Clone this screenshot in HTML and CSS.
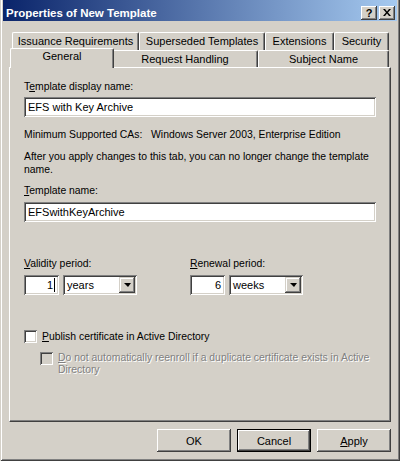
FILE: index.html
```html
<!DOCTYPE html>
<html lang="en">
<head>
    <meta charset="UTF-8">
    <title>Properties of New Template</title>
<link rel="stylesheet" href="styles.css">
</head>
<body>
    <div class="window">
        <div class="titlebar">
            <span class="title">Properties of New Template</span>
            <div class="caption-btns">
                <span class="cap-btn">?</span>
                <span class="cap-btn">
                    <svg width="8" height="7" viewBox="0 0 8 7"><path d="M0 0h2l2 2.5L6 0h2L5 3.5 8 7H6L4 4.5 2 7H0l3-3.5z" fill="#000"/></svg>
                </span>
            </div>
        </div>

        <div class="client">
            <div class="tabs">
                <div class="tab-row back">
                    <div class="tab t-issuance">Issuance Requirements</div>
                    <div class="tab t-superseded">Superseded Templates</div>
                    <div class="tab t-extensions">Extensions</div>
                    <div class="tab t-security">Security</div>
                </div>
                <div class="tab-row front">
                    <div class="tab t-general active">General</div>
                    <div class="tab t-request">Request Handling</div>
                    <div class="tab t-subject">Subject Name</div>
                </div>
            </div>

            <div class="panel">
                <div class="label">T<u>e</u>mplate display name:</div>
                <div class="edit wide">EFS with Key Archive</div>

                <div class="info">Minimum Supported CAs:&nbsp;&nbsp; Windows Server 2003, Enterprise Edition</div>

                <div class="note">After you apply changes to this tab, you can no longer change the template<br>name.</div>

                <div class="label gap-small"><u>T</u>emplate name:</div>
                <div class="edit wide name">EFSwithKeyArchive</div>

                <div class="periods">
                    <div class="period">
                        <div class="label"><u>V</u>alidity period:</div>
                        <div class="period-controls">
                            <div class="edit num">1<span class="caret"></span></div>
                            <div class="combo">
                                <span class="combo-text">years</span>
                                <span class="combo-btn"><span class="arrow"></span></span>
                            </div>
                        </div>
                    </div>
                    <div class="period">
                        <div class="label"><u>R</u>enewal period:</div>
                        <div class="period-controls">
                            <div class="edit num">6</div>
                            <div class="combo">
                                <span class="combo-text">weeks</span>
                                <span class="combo-btn"><span class="arrow"></span></span>
                            </div>
                        </div>
                    </div>
                </div>

                <div class="check publish">
                    <span class="box"></span>
                    <span class="check-label"><u>P</u>ublish certificate in Active Directory</span>
                </div>
                <div class="check sub disabled">
                    <span class="box"></span>
                    <span class="check-label"><u>D</u>o not automatically reenroll if a duplicate certificate exists in Active<br>Directory</span>
                </div>
            </div>

            <div class="buttons">
                <button class="btn">OK</button>
                <button class="btn default">Cancel</button>
                <button class="btn"><u>A</u>pply</button>
            </div>
        </div>
    </div>
</body>
</html>
```

FILE: styles.css
```css
body {
    margin: 0;
    font-family: "Liberation Sans", Arial, sans-serif;
    font-size: 10.4px;
    color: #000;
    background-color: #d4d0c8;
}
.window {
    width: 400px;
    height: 461px;
    box-sizing: border-box;
    padding: 0 3px 3px 3px;
    background-color: #d4d0c8;
    box-shadow: inset 1px 0 #d4d0c8, inset -1px -1px #404040, inset 2px 0 #fff, inset -2px -2px #808080;
}
.titlebar {
    height: 21px;
    box-sizing: border-box;
    padding: 4px 2px 0 3px;
    display: flex;
    align-items: center;
    justify-content: space-between;
    background: linear-gradient(to right, #0a246a, #a6caf0);
}
.title {
    color: #fff;
    font-weight: bold;
    font-size: 11.5px;
}
.caption-btns {
    display: flex;
    gap: 2px;
}
.cap-btn {
    width: 16px;
    height: 14px;
    box-sizing: border-box;
    display: flex;
    align-items: center;
    justify-content: center;
    background-color: #d4d0c8;
    font-weight: bold;
    font-size: 11px;
    box-shadow: inset -1px -1px #404040, inset 1px 1px #fff, inset -2px -2px #808080;
}

.client {
    padding: 11px 6px 0 6px;
}

/* tabs */
.tab-row {
    display: flex;
    padding-left: 3px;
}
.tab-row.back {
    height: 18px;
}
.tab-row.front {
    height: 17px;
    align-items: flex-start;
}
.tab {
    box-sizing: border-box;
    height: 100%;
    text-align: center;
    line-height: 16px;
    font-size: 11px;
    background-color: #d4d0c8;
    border-top: 1px solid #fff;
    border-left: 1px solid #fff;
    border-right: 1px solid #404040;
    border-radius: 2px 2px 0 0;
    box-shadow: inset -1px 0 #808080;
    white-space: nowrap;
}
.t-issuance { width: 127px; }
.t-superseded { width: 126px; }
.t-extensions { width: 69px; }
.t-security { width: 55px; }
.t-general { width: 100px; }
.t-request { width: 146px; }
.t-subject { width: 131px; }
.tab.active {
    position: relative;
    z-index: 1;
    width: 104px;
    height: 20px;
    margin: -2px -2px 0 -2px;
    line-height: 15px;
}

/* page */
.panel {
    height: 355px;
    box-sizing: border-box;
    padding: 12px 14px 0 14px;
    border-top: 1px solid #fff;
    border-left: 1px solid #fff;
    border-right: 1px solid #404040;
    border-bottom: 1px solid #404040;
    box-shadow: inset -1px -1px #808080;
    line-height: 13px;
}
.edit {
    height: 20px;
    box-sizing: border-box;
    margin-top: 4px;
    padding: 0 4px;
    line-height: 20px;
    font-size: 11px;
    background-color: #fff;
    box-shadow: inset 1px 1px #808080, inset -1px -1px #fff, inset 2px 2px #404040, inset -2px -2px #d4d0c8;
}
.edit.wide + .info {
    margin-top: 11px;
}
.note {
    margin-top: 9px;
}
.gap-small {
    margin-top: 8px;
}
.edit.name {
    margin-top: 5px;
}
.periods {
    display: grid;
    grid-template-columns: 166px 1fr;
    margin-top: 35px;
}
.period-controls {
    display: flex;
    gap: 4px;
    margin-top: 5px;
}
.period-controls .edit {
    margin-top: 0;
}
.edit.num {
    width: 35px;
    text-align: right;
    padding-right: 4px;
    display: flex;
    justify-content: flex-end;
    align-items: center;
}
.caret {
    width: 1px;
    height: 14px;
    margin-left: 1px;
    background-color: #000;
}
.combo {
    width: 74px;
    height: 20px;
    box-sizing: border-box;
    padding: 2px;
    display: flex;
    font-size: 11px;
    background-color: #fff;
    box-shadow: inset 1px 1px #808080, inset -1px -1px #fff, inset 2px 2px #404040, inset -2px -2px #d4d0c8;
}
.combo-text {
    flex: 1;
    padding-left: 2px;
    line-height: 16px;
}
.combo-btn {
    width: 16px;
    height: 16px;
    box-sizing: border-box;
    display: flex;
    align-items: center;
    justify-content: center;
    background-color: #d4d0c8;
    box-shadow: inset -1px -1px #404040, inset 1px 1px #d4d0c8, inset -2px -2px #808080, inset 2px 2px #fff;
}
.arrow {
    width: 0;
    height: 0;
    border-left: 4px solid transparent;
    border-right: 3px solid transparent;
    border-top: 4px solid #000;
}

/* checkboxes */
.check {
    display: flex;
    gap: 5px;
}
.check.publish {
    margin-top: 35px;
}
.check.sub {
    margin-top: 9px;
    padding-left: 16px;
}
.box {
    flex: none;
    width: 13px;
    height: 13px;
    box-sizing: border-box;
    background-color: #fff;
    box-shadow: inset 1px 1px #808080, inset -1px -1px #fff, inset 2px 2px #404040, inset -2px -2px #d4d0c8;
}
.disabled .box {
    background-color: #d4d0c8;
}
.disabled .check-label {
    color: #808080;
    text-shadow: 1px 1px #fff;
    line-height: 12px;
}

/* bottom buttons */
.buttons {
    display: flex;
    justify-content: flex-end;
    gap: 6px;
    margin-top: 7px;
}
.btn {
    width: 74px;
    height: 23px;
    padding: 0;
    border: none;
    font-family: "Liberation Sans", Arial, sans-serif;
    font-size: 11px;
    color: #000;
    background-color: #d4d0c8;
    box-shadow: inset -1px -1px #404040, inset 1px 1px #fff, inset -2px -2px #808080;
}
.btn.default {
    box-shadow: inset 0 0 0 1px #000, inset -2px -2px #404040, inset 2px 2px #fff, inset -3px -3px #808080;
}
```
